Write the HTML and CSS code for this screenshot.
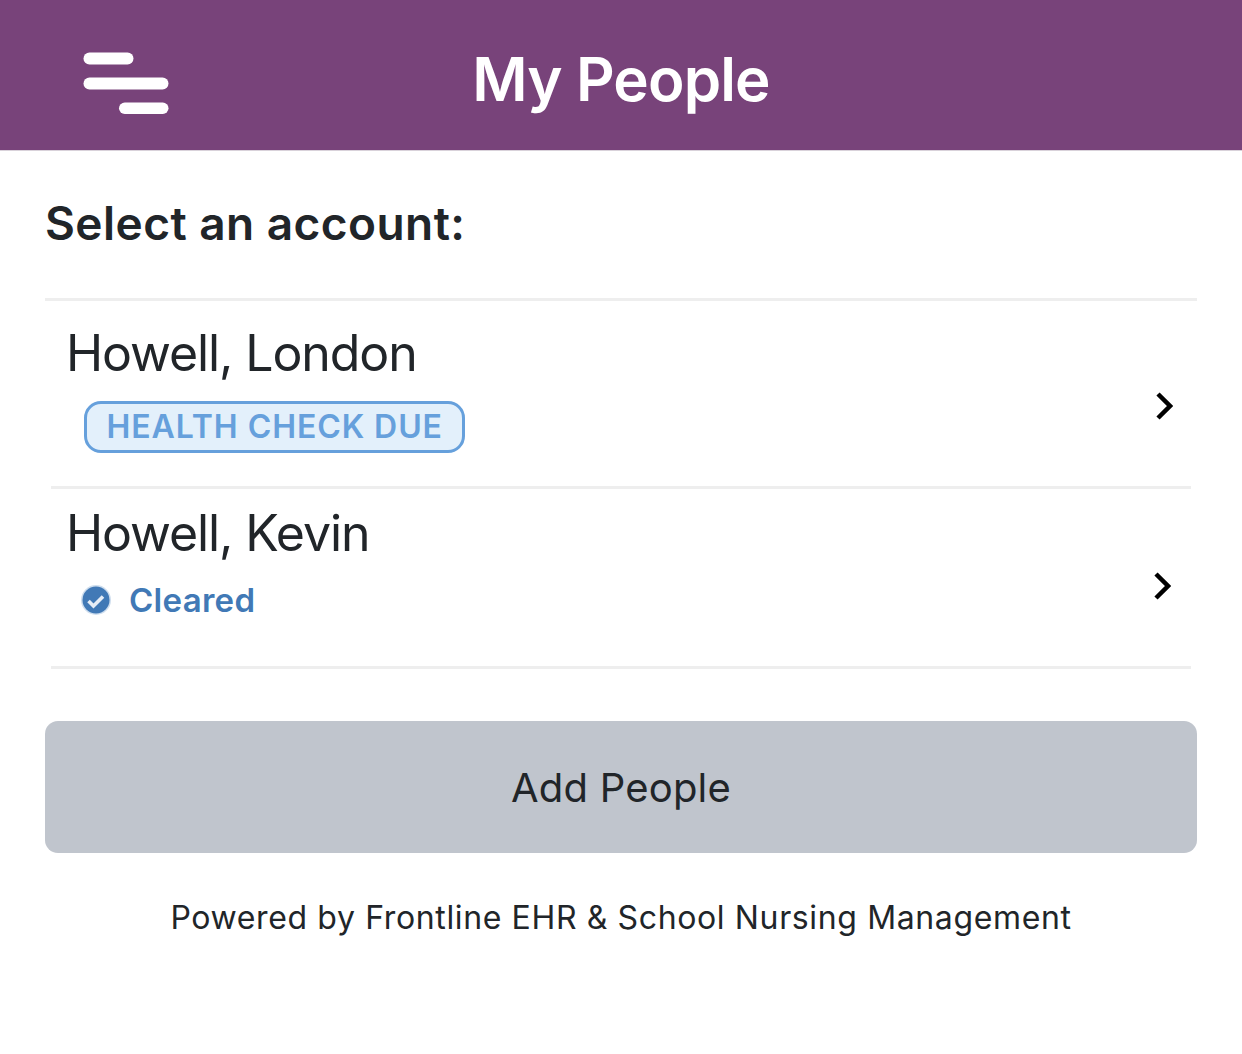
FILE: index.html
```html
<!DOCTYPE html>
<html lang="en">
<head>
<meta charset="utf-8">
<title>My People</title>
<link rel="stylesheet" href="styles.css">
</head>
<body>
<header class="topbar">
  <svg class="menu-icon" width="86" height="62" viewBox="0 0 86 62" aria-hidden="true">
    <rect x="0.5" y="0.5" width="50" height="12" rx="6"/>
    <rect x="0.5" y="25.5" width="85" height="12" rx="6"/>
    <rect x="36" y="50.5" width="49.5" height="11.5" rx="5.75"/>
  </svg>
  <h1 class="title">My People</h1>
</header>
<main class="content">
  <h2 class="prompt">Select an account:</h2>
  <ul class="accounts">
    <li class="account account-first">
      <div class="account-body">
        <div class="name">Howell, London</div>
        <span class="badge">HEALTH CHECK DUE</span>
      </div>
      <svg class="chevron" width="18" height="28" viewBox="0 0 18 28" aria-hidden="true"><path d="M3 2l12 12L3 26"/></svg>
    </li>
    <li class="account account-second">
      <div class="account-body">
        <div class="name">Howell, Kevin</div>
        <div class="status">
          <svg class="check" width="30" height="30" viewBox="0 0 30 30" aria-hidden="true">
            <circle cx="15" cy="15" r="15" fill="#cfdeee"/>
            <circle cx="15" cy="15" r="13.5" fill="#4179b6"/>
            <path d="M7.5 16l5 5 9.5-9.5" fill="none" stroke="#e6edf6" stroke-width="3.6"/>
          </svg>
          <span>Cleared</span>
        </div>
      </div>
      <svg class="chevron" width="18" height="28" viewBox="0 0 18 28" aria-hidden="true"><path d="M3 2l12 12L3 26"/></svg>
    </li>
  </ul>
  <button class="add" type="button">Add People</button>
  <p class="powered">Powered by Frontline EHR &amp; School Nursing Management</p>
</main>
</body>
</html>
```
FILE: styles.css
```css
* { box-sizing: border-box; }
html, body { margin: 0; padding: 0; background: #fff; }
body {
  font-family: Inter, "Liberation Sans", sans-serif;
  color: #212529;
  height: 1054px;
  overflow: hidden;
}
.topbar {
  position: relative;
  height: 151px;
  background: #78437a;
  border-bottom: 1px solid #d9d2da;
  display: flex;
  align-items: center;
  justify-content: center;
}
.menu-icon { position: absolute; left: 83px; top: 52px; fill: #fff; }
.title {
  margin: 8px 0 0;
  font-size: 60px;
  line-height: 72px;
  font-weight: 600;
  letter-spacing: -0.85px;
  color: #fff;
}
.content { padding: 0 45px; }
.prompt {
  margin: 0;
  padding-top: 44px;
  height: 147px;
  font-size: 46px;
  line-height: 56px;
  font-weight: 600;
  letter-spacing: 0.45px;
}
.accounts { list-style: none; margin: 0; padding: 0; }
.account {
  display: flex;
  align-items: center;
  justify-content: space-between;
  height: 180px;
  margin: 0 6px;
  border-bottom: 3px solid #eeeeee;
}
.account-first {
  height: 191px;
  margin: 0;
  padding-left: 6px;
  padding-right: 6px;
  border-top: 3px solid #eeeeee;
  border-bottom: 0;
  position: relative;
}
.account-first::after {
  content: "";
  position: absolute;
  left: 6px;
  right: 6px;
  bottom: 0;
  height: 3px;
  background: #eeeeee;
}
.account-body { padding-left: 15px; align-self: flex-start; }
.name {
  font-size: 50px;
  line-height: 60px;
  letter-spacing: -1.1px;
  margin-top: 14px;
}
.account-first .name { margin-top: 22px; }
.badge {
  display: inline-block;
  margin: 18px 0 0 18px;
  height: 52px;
  padding: 0 19.5px;
  border: 3px solid #66a0dc;
  border-radius: 17px;
  background: #e3f0fb;
  color: #66a0dc;
  font-size: 32px;
  line-height: 46px;
  font-weight: 600;
  letter-spacing: 0.92px;
}
.status {
  display: flex;
  align-items: center;
  gap: 18px;
  margin: 14px 0 0 15px;
  color: #4179b6;
  font-size: 33px;
  line-height: 46px;
  font-weight: 600;
  letter-spacing: 0.3px;
}
.chevron { flex: none; margin: 16px 20px 0 0; }
.account-first .chevron { margin: 22px 18px 0 0; }
.chevron path { fill: none; stroke: #000; stroke-width: 4.5; }
.add {
  display: block;
  width: 100%;
  height: 132px;
  margin-top: 52px;
  border: 0;
  border-radius: 13px;
  background: #c0c5cd;
  color: #212529;
  font: 400 40px/48px Inter, "Liberation Sans", sans-serif;
  letter-spacing: 0.2px;
  padding-top: 2px;
}
.powered {
  margin: 46px 0 0;
  text-align: center;
  font-size: 32px;
  line-height: 38px;
  letter-spacing: 0.63px;
}
```
